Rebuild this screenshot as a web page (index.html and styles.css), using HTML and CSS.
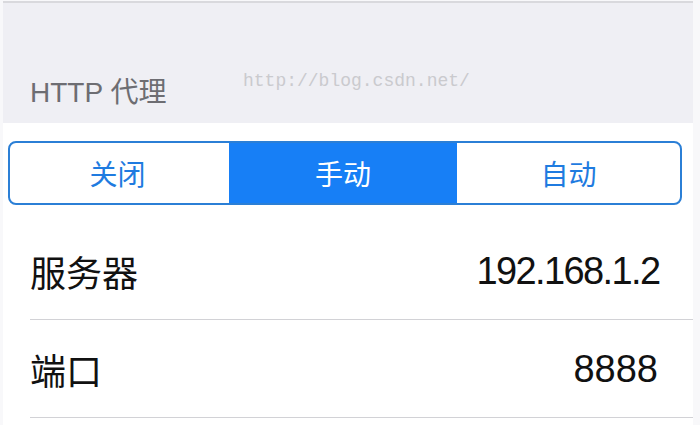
FILE: index.html
```html
<!DOCTYPE html>
<html lang="zh-CN">
<head>
<meta charset="utf-8">
<title>HTTP 代理</title>
<link rel="stylesheet" href="styles.css">
</head>
<body>
<div class="screen">
  <div class="section-header">
    <span class="header-title">HTTP 代理</span>
    <span class="watermark">http://blog.csdn.net/</span>
  </div>
  <div class="segment-wrap">
    <div class="segmented">
      <div class="seg">关闭</div>
      <div class="seg seg-active">手动</div>
      <div class="seg">自动</div>
    </div>
  </div>
  <div class="row">
    <span class="row-label">服务器</span>
    <span class="row-value row-value-ip">192.168.1.2</span>
  </div>
  <div class="row">
    <span class="row-label">端口</span>
    <span class="row-value">8888</span>
  </div>
</div>
</body>
</html>
```
FILE: styles.css
```css
html, body {
  margin: 0;
  padding: 0;
}
body {
  background: #f8f8fa;
  width: 700px;
  height: 425px;
  overflow: hidden;
  font-family: "Liberation Sans", "Noto Sans CJK SC", sans-serif;
}
.screen {
  width: 690px;
  margin: 1px 0 0 3px;
  border-top: 2px solid #d9d9dd;
  background: #ffffff;
  height: 430px;
}
.section-header {
  position: relative;
  height: 120px;
  background: #efeff4;
  display: flex;
  align-items: flex-end;
  padding: 0 0 16px 27px;
  box-sizing: border-box;
}
.header-title {
  font-size: 28px;
  line-height: 28px;
  color: #6d6d72;
}
.watermark {
  position: absolute;
  left: 240px;
  top: 68px;
  font-family: "Liberation Mono", "DejaVu Sans Mono", monospace;
  font-size: 18px;
  color: #cacace;
}
.segment-wrap {
  padding: 18px 11px 17px 5px;
  background: #ffffff;
}
.segmented {
  display: grid;
  grid-template-columns: 219px 228px 1fr;
  height: 64px;
  box-sizing: border-box;
  border: 2px solid #2b7fd6;
  border-radius: 8px;
  overflow: hidden;
}
.seg {
  display: flex;
  align-items: center;
  justify-content: center;
  font-size: 28px;
  color: #1f7be0;
  font-family: "Noto Sans CJK SC", sans-serif;
}
.seg:first-child {
  padding-right: 4px;
}
.seg-active {
  background: #177ff6;
  color: #ffffff;
}
.row {
  height: 98px;
  margin-left: 27px;
  padding-right: 35px;
  border-bottom: 1px solid #d2d2d6;
  box-sizing: border-box;
  display: flex;
  align-items: center;
  justify-content: space-between;
  color: #111111;
}
.row-label {
  font-family: "Noto Sans CJK SC", sans-serif;
  font-size: 36px;
  line-height: 1;
}
.row-value {
  font-size: 38px;
  line-height: 1;
}
.row-value-ip {
  letter-spacing: -1.6px;
  margin-right: -1.6px;
}
```
